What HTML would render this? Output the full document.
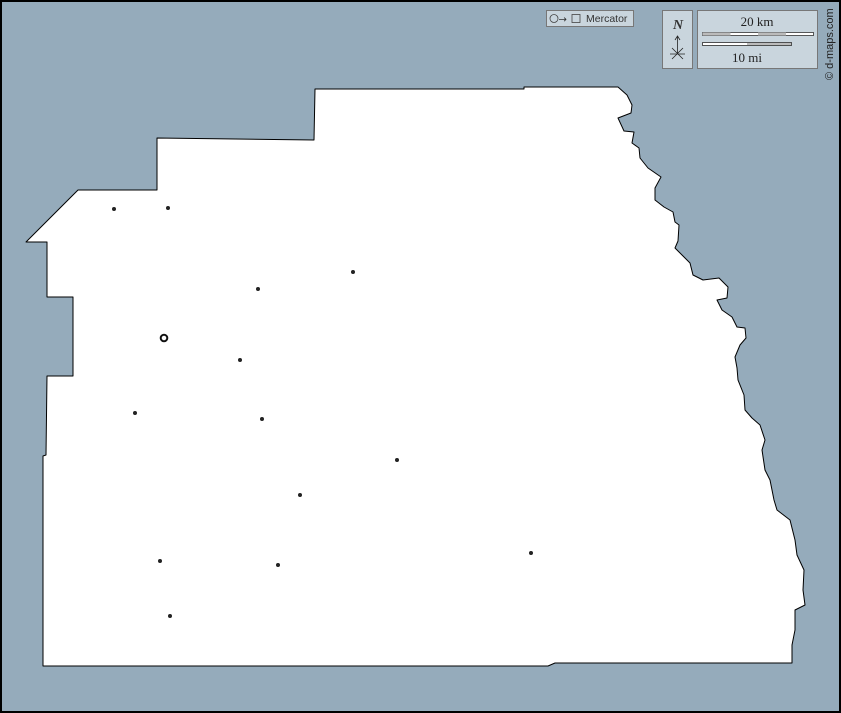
<!DOCTYPE html>
<html><head><style>
body{margin:0;width:841px;height:713px;overflow:hidden;background:#000}
</style></head><body>
<svg width="841" height="713" xmlns="http://www.w3.org/2000/svg" style="display:block">
<rect x="2" y="2" width="837" height="709" fill="#95abbb"/>
<polygon fill="#fff" stroke="#000" stroke-width="1" stroke-linejoin="round" points="26,242 78,190 157,190 157,138 314,140 315,89 524,89 524,87 618,87 627,95 632,105 631,113 618,118 624,131 634,132 632,143 639,148 640,158 648,168 661,177 655,188 655,200 664,207 673,212 675,222 679,225 678,241 675,248 682,255 690,263 693,275 703,280 719,278 728,287 727,298 717,300 722,310 732,317 737,327 745,328 746,338 740,345 735,357 737,368 738,380 744,395 745,410 752,418 760,425 765,440 762,450 765,470 770,480 774,500 777,510 790,520 795,540 797,555 804,570 803,590 805,605 795,610 795,630 792,645 792,663 555,663 548,666 43,666 43,456 46,455 47,376 73,376 73,297 47,297 47,242"/>
<g fill="#222">
<circle cx="114" cy="209" r="2"/><circle cx="168" cy="208" r="2"/><circle cx="353" cy="272" r="2"/><circle cx="258" cy="289" r="2"/><circle cx="240" cy="360" r="2"/><circle cx="135" cy="413" r="2"/><circle cx="262" cy="419" r="2"/><circle cx="397" cy="460" r="2"/><circle cx="300" cy="495" r="2"/><circle cx="531" cy="553" r="2"/><circle cx="160" cy="561" r="2"/><circle cx="278" cy="565" r="2"/><circle cx="170" cy="616" r="2"/>
</g>
<circle cx="164" cy="338" r="3.3" fill="none" stroke="#111" stroke-width="2"/>
<rect x="546.5" y="10.5" width="87" height="16" fill="#c9d5dd" stroke="#777"/>
<circle cx="554" cy="18.5" r="4" fill="none" stroke="#444" stroke-width="0.8"/>
<text x="558.5" y="22.5" font-family="DejaVu Sans,sans-serif" font-size="10" fill="#333">→</text>
<rect x="572" y="14.5" width="8" height="8" fill="none" stroke="#444" stroke-width="0.8"/>
<text x="586" y="22" font-family="Liberation Sans,sans-serif" font-size="10.5" fill="#333">Mercator</text>
<rect x="662.5" y="10.5" width="30" height="58" fill="#c9d5dd" stroke="#777"/>
<text x="678" y="29" text-anchor="middle" font-family="Liberation Serif,serif" font-style="italic" font-weight="bold" font-size="14" fill="#333">N</text>
<path d="M677.5 53V36M675 40l2.5-4 2.5 4M670 54h15M672 48l11 11M683 48l-11 11" stroke="#222" stroke-width="0.8" fill="none"/>
<rect x="697.5" y="10.5" width="120" height="58" fill="#c9d5dd" stroke="#777"/>
<text x="757" y="26" text-anchor="middle" font-family="Liberation Serif,serif" font-size="13" fill="#222">20 km</text>
<rect x="702.5" y="32.5" width="111" height="3" fill="#fff" stroke="#333" stroke-width="0.8"/>
<rect x="702.5" y="32.5" width="28" height="3" fill="#bbb"/><rect x="758" y="32.5" width="28" height="3" fill="#bbb"/>
<rect x="702.5" y="42.5" width="89" height="3" fill="#bbb" stroke="#333" stroke-width="0.8"/>
<rect x="703" y="43" width="44" height="2" fill="#fff"/>
<text x="747" y="62" text-anchor="middle" font-family="Liberation Serif,serif" font-size="13" fill="#222">10 mi</text>
<text transform="translate(833,80) rotate(-90)" font-family="Liberation Sans,sans-serif" font-size="11" fill="#222">© d-maps.com</text>
</svg>
</body></html>
